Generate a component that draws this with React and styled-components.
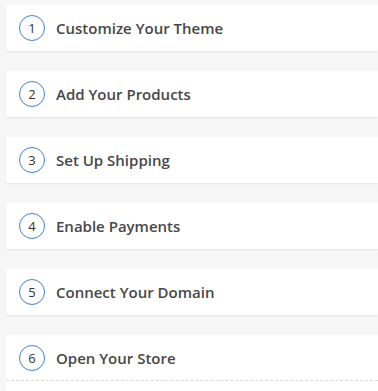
import React from "react";
import styled, { createGlobalStyle } from "styled-components";

const Global = createGlobalStyle`
  html, body { margin: 0; padding: 0; background: #f6f6f6; }
  body { font-family: "Open Sans", "Noto Sans", sans-serif; }
`;

const List = styled.div`
  display: flex;
  flex-direction: column;
  gap: 20px;
  padding: 5px 0 0 6px;
  height: 391px;
  box-sizing: border-box;
  overflow: hidden;
`;

const Card = styled.div`
  background: #fff;
  border-radius: 2px 0 0 2px;
  box-shadow: ${(p) => (p.$open ? "none" : "0 1px 2px rgba(0,0,0,0.08)")};
  flex-shrink: 0;
`;

const Header = styled.div`
  display: flex;
  align-items: center;
  gap: 11px;
  height: 46px;
  padding-left: 13px;
  box-sizing: border-box;
  border-bottom: ${(p) => (p.$open ? "1px dashed #d8d8d8" : "none")};
`;

const Step = styled.span`
  width: 26px;
  height: 26px;
  box-sizing: border-box;
  border: 1.5px solid #3d7fd6;
  border-radius: 50%;
  display: flex;
  align-items: center;
  justify-content: center;
  font-size: 13px;
  color: #333;
  font-weight: 400;
  flex-shrink: 0;
`;

const Title = styled.span`
  font-size: 15px;
  font-weight: 600;
  color: #474747;
`;

const Body = styled.div`
  height: 30px;
`;

const steps = [
  "Customize Your Theme",
  "Add Your Products",
  "Set Up Shipping",
  "Enable Payments",
  "Connect Your Domain",
  "Open Your Store",
];

export default function App() {
  return (
    <>
      <Global />
      <List>
        {steps.map((s, i) => {
          const open = i === steps.length - 1;
          return (
            <Card key={s} $open={open}>
              <Header $open={open}>
                <Step>{i + 1}</Step>
                <Title>{s}</Title>
              </Header>
              {open && <Body />}
            </Card>
          );
        })}
      </List>
    </>
  );
}
